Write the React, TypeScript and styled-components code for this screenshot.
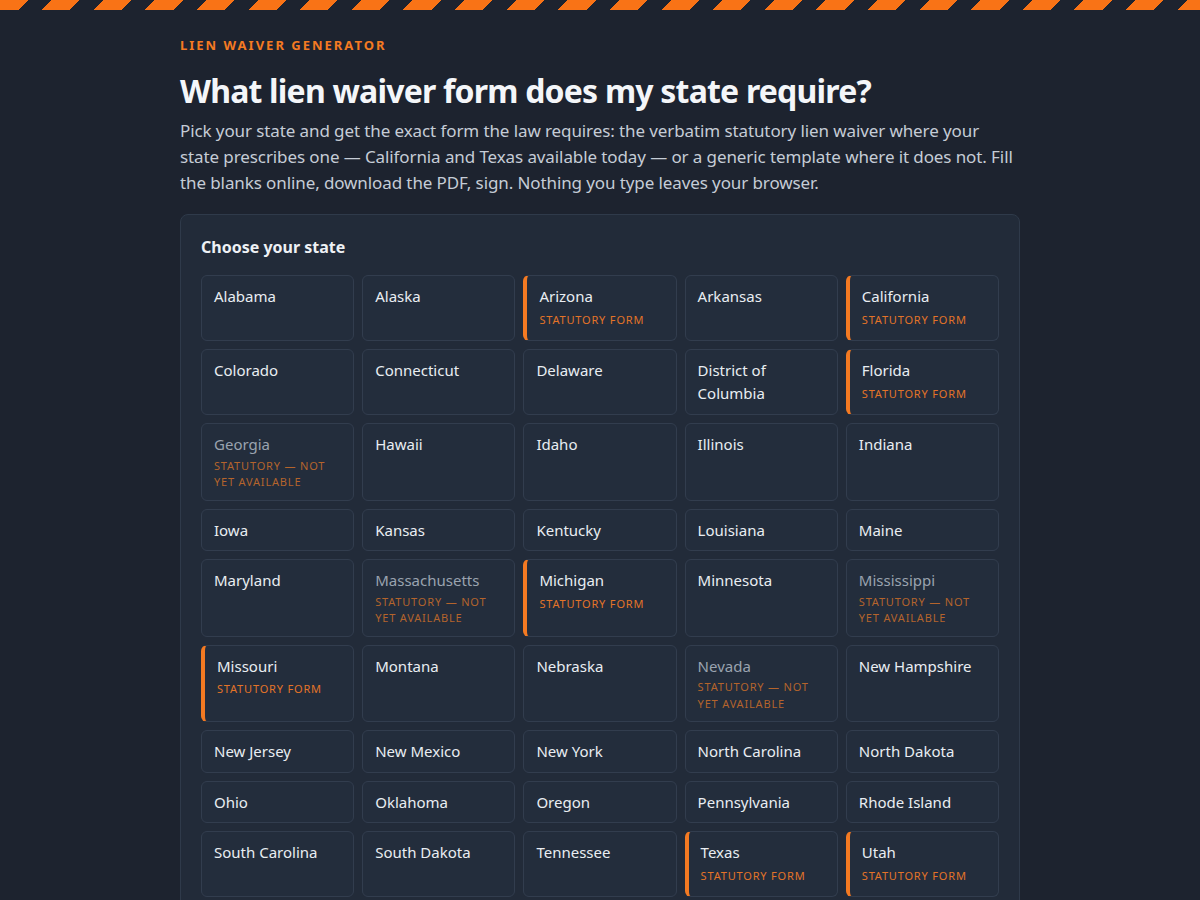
import styled, { createGlobalStyle } from "styled-components";

type Status = "none" | "statutory" | "pending";

type StateItem = {
  name: string;
  status: Status;
};

const statutory = ["Arizona", "California", "Florida", "Michigan", "Missouri", "Texas", "Utah", "Wyoming"];
const pending = ["Georgia", "Massachusetts", "Mississippi", "Nevada"];

const names = [
  "Alabama", "Alaska", "Arizona", "Arkansas", "California",
  "Colorado", "Connecticut", "Delaware", "District of Columbia", "Florida",
  "Georgia", "Hawaii", "Idaho", "Illinois", "Indiana",
  "Iowa", "Kansas", "Kentucky", "Louisiana", "Maine",
  "Maryland", "Massachusetts", "Michigan", "Minnesota", "Mississippi",
  "Missouri", "Montana", "Nebraska", "Nevada", "New Hampshire",
  "New Jersey", "New Mexico", "New York", "North Carolina", "North Dakota",
  "Ohio", "Oklahoma", "Oregon", "Pennsylvania", "Rhode Island",
  "South Carolina", "South Dakota", "Tennessee", "Texas", "Utah",
  "Vermont", "Virginia", "Washington", "West Virginia", "Wisconsin",
  "Wyoming",
];

const states: StateItem[] = names.map((name) => ({
  name,
  status: statutory.includes(name) ? "statutory" : pending.includes(name) ? "pending" : "none",
}));

const GlobalStyle = createGlobalStyle`
  html, body {
    margin: 0;
    padding: 0;
    background: #1d232f;
  }
  body {
    font-family: "Noto Sans", "Open Sans", sans-serif;
    color: #e8edf3;
  }
  * {
    box-sizing: border-box;
  }
`;

const HazardStripe = styled.div`
  height: 10px;
  background: repeating-linear-gradient(
    135deg,
    #f97316 0 20px,
    transparent 20px 36.5px
  );
`;

const Main = styled.main`
  width: 840px;
  margin: 0 auto;
  padding: 25px 0 40px;
`;

const Eyebrow = styled.div`
  font-size: 13px;
  line-height: 20px;
  font-weight: 700;
  letter-spacing: 2px;
  color: #f47a22;
  text-transform: uppercase;
`;

const Title = styled.h1`
  margin: 16px 0 0;
  font-size: 32px;
  line-height: 40px;
  font-weight: 700;
  letter-spacing: -0.8px;
  color: #f4f6f9;
`;

const Lead = styled.p`
  margin: 7px 0 0;
  font-size: 17px;
  line-height: 26px;
  letter-spacing: -0.1px;
  color: #c5ccd6;
`;

const Panel = styled.section`
  margin-top: 18px;
  background: #222b39;
  border: 1px solid #2f3a4a;
  border-radius: 8px;
  padding: 20px;
`;

const PanelTitle = styled.h2`
  margin: 0 0 16px;
  font-size: 16px;
  line-height: 24px;
  font-weight: 700;
  color: #eef1f5;
`;

const Grid = styled.div`
  display: grid;
  grid-template-columns: repeat(5, 1fr);
  gap: 8px;
`;

const Cell = styled.button<{ $status: Status }>`
  display: flex;
  flex-direction: column;
  justify-content: flex-start;
  align-items: stretch;
  text-align: left;
  font-family: inherit;
  background: #232d3c;
  border: 1px solid #323d4e;
  border-left: ${(p) => (p.$status === "statutory" ? "4px solid #f47a22" : "1px solid #323d4e")};
  border-radius: 6px;
  padding: 9px 12px;
  cursor: pointer;
`;

const Name = styled.div<{ $muted: boolean }>`
  font-size: 15px;
  line-height: 22.5px;
  color: ${(p) => (p.$muted ? "#9aa3af" : "#e9edf2")};
`;

const Tag = styled.div<{ $pending: boolean }>`
  margin: ${(p) => (p.$pending ? "2px 0 0" : "4px 0 3px")};
  font-size: 11px;
  line-height: 16.5px;
  letter-spacing: 0.075em;
  text-transform: uppercase;
  color: ${(p) => (p.$pending ? "#b4642c" : "#e47428")};
`;

export default function App() {
  return (
    <>
      <GlobalStyle />
      <HazardStripe />
      <Main>
        <Eyebrow>Lien Waiver Generator</Eyebrow>
        <Title>What lien waiver form does my state require?</Title>
        <Lead>
          Pick your state and get the exact form the law requires: the verbatim statutory lien
          waiver where your state prescribes one — California and Texas available today — or a
          generic template where it does not. Fill the blanks online, download the PDF, sign.
          Nothing you type leaves your browser.
        </Lead>
        <Panel>
          <PanelTitle>Choose your state</PanelTitle>
          <Grid>
            {states.map((s) => (
              <Cell key={s.name} $status={s.status} type="button">
                <Name $muted={s.status === "pending"}>{s.name}</Name>
                {s.status === "statutory" && <Tag $pending={false}>Statutory form</Tag>}
                {s.status === "pending" && <Tag $pending>Statutory — not yet available</Tag>}
              </Cell>
            ))}
          </Grid>
        </Panel>
      </Main>
    </>
  );
}
